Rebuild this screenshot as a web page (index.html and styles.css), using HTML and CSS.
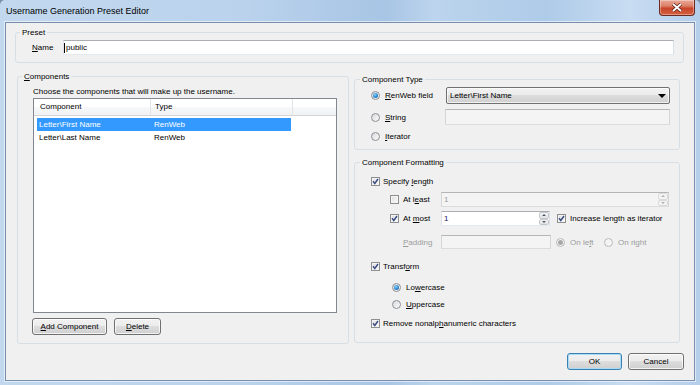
FILE: index.html
```html
<!DOCTYPE html>
<html lang="en">
  <head>
    <meta charset="UTF-8" />
    <title>Username Generation Preset Editor</title>
    <link rel="stylesheet" href="styles.css">
  </head>
  <body>
    <div class="window">
      <div class="titlebar">
        <span class="title">Username Generation Preset Editor</span>
        <div class="close-btn">
          <svg width="12" height="9" viewBox="0 0 12 9">
            <path class="x-shadow" d="M2 1 L10 8 M10 1 L2 8" />
            <path class="x-mark" d="M2 1 L10 8 M10 1 L2 8" />
          </svg>
        </div>
      </div>

      <div class="client">
        <fieldset class="group preset">
          <legend>Preset</legend>
          <div class="name-row">
            <span class="name-label"><u>N</u>ame</span>
            <div class="textbox name-box"><span class="caret"></span>public</div>
          </div>
        </fieldset>

        <div class="main">
          <fieldset class="group components">
            <legend><u>C</u>omponents</legend>
            <p class="hint">Choose the components that will make up the username.</p>
            <div class="listview">
              <div class="lv-header">
                <div class="col col-comp">Component</div>
                <div class="col col-type">Type</div>
                <div class="col col-fill"></div>
              </div>
              <div class="lv-row selected">
                <span class="cell-comp">Letter\First Name</span>
                <span class="cell-type">RenWeb</span>
              </div>
              <div class="lv-row">
                <span class="cell-comp">Letter\Last Name</span>
                <span class="cell-type">RenWeb</span>
              </div>
            </div>
            <div class="list-buttons">
              <button class="btn btn-add"><u>A</u>dd Component</button>
              <button class="btn btn-delete"><u>D</u>elete</button>
            </div>
          </fieldset>

          <div class="side">
            <fieldset class="group comp-type">
              <legend>Component Type</legend>
              <div class="type-grid">
                <div class="option"><span class="radio checked"></span><span><u>R</u>enWeb field</span></div>
                <div class="combo">
                  <span class="combo-text">Letter\First Name</span>
                  <span class="combo-arrow"></span>
                </div>
                <div class="option"><span class="radio"></span><span><u>S</u>tring</span></div>
                <div class="textbox disabled string-box"></div>
                <div class="option"><span class="radio"></span><span><u>I</u>terator</span></div>
                <div></div>
              </div>
            </fieldset>

            <fieldset class="group formatting">
              <legend>Component Formatting</legend>

              <div class="fmt-row r-specify">
                <span class="check on"><svg viewBox="0 0 7 7"><path d="M1 3.2 L2.8 5.4 L6 1" /></svg></span>
                <span class="check-label">Specify <u>l</u>ength</span>
              </div>

              <div class="fmt-row r-least sub">
                <span class="check"></span>
                <span class="check-label field-label">At l<u>e</u>ast</span>
                <div class="textbox disabled spinbox least-box">
                  <span class="spin-value">1</span>
                  <div class="spin"><span class="spin-up"></span><span class="spin-down"></span></div>
                </div>
              </div>

              <div class="fmt-row r-most sub">
                <span class="check on"><svg viewBox="0 0 7 7"><path d="M1 3.2 L2.8 5.4 L6 1" /></svg></span>
                <span class="check-label field-label">At <u>m</u>ost</span>
                <div class="textbox spinbox most-box">
                  <span class="spin-value">1</span>
                  <div class="spin"><span class="spin-up"></span><span class="spin-down"></span></div>
                </div>
                <span class="check on increase"><svg viewBox="0 0 7 7"><path d="M1 3.2 L2.8 5.4 L6 1" /></svg></span>
                <span class="check-label increase-label">Increase length as iterator</span>
              </div>

              <div class="fmt-row r-padding">
                <span class="field-label muted"><u>P</u>adding</span>
                <div class="textbox disabled padding-box"></div>
                <div class="option opt-left"><span class="radio disabled checked"></span><span class="muted">On le<u>f</u>t</span></div>
                <div class="option"><span class="radio disabled"></span><span class="muted">On ri<u>g</u>ht</span></div>
              </div>

              <div class="fmt-row r-transform">
                <span class="check on"><svg viewBox="0 0 7 7"><path d="M1 3.2 L2.8 5.4 L6 1" /></svg></span>
                <span class="check-label">Transf<u>o</u>rm</span>
              </div>

              <div class="fmt-row r-lower case-row">
                <div class="option"><span class="radio checked"></span><span>Lo<u>w</u>ercase</span></div>
              </div>

              <div class="fmt-row r-upper case-row">
                <div class="option"><span class="radio"></span><span><u>U</u>ppercase</span></div>
              </div>

              <div class="fmt-row r-remove">
                <span class="check on"><svg viewBox="0 0 7 7"><path d="M1 3.2 L2.8 5.4 L6 1" /></svg></span>
                <span class="check-label">Remove nonalp<u>h</u>anumeric characters</span>
              </div>
            </fieldset>
          </div>
        </div>

        <div class="dialog-buttons">
          <button class="btn btn-default">OK</button>
          <button class="btn btn-cancel">Cancel</button>
        </div>
      </div>
    </div>
  </body>
</html>
```

FILE: styles.css
```css
html {
  background: #7b8da3;
}

body {
  margin: 0;
  font-family: "Liberation Sans", Arial, sans-serif;
  font-size: 8px;
  color: #000;
}

u {
  text-underline-offset: 1px;
}

.window {
  width: 700px;
  height: 385px;
  box-sizing: border-box;
  border-radius: 5px 5px 0 0;
  overflow: hidden;
  background: linear-gradient(90deg, #c2d8ef 0%, #bad2ec 35%, #a8c5e5 55%, #bcd4ed 62%, #aecbe8 78%, #c8dcf2 90%, #b4cde9 100%);
}

/* title bar */
.titlebar {
  height: 22px;
  display: flex;
  align-items: flex-start;
}

.title {
  font-size: 9px;
  line-height: 10px;
  margin: 6px 0 0 6px;
  color: #000;
}

.close-btn {
  width: 36px;
  height: 16px;
  box-sizing: border-box;
  margin-left: auto;
  margin-right: 5px;
  border: 1px solid #6b2b21;
  border-top: none;
  border-radius: 0 0 4px 4px;
  background: linear-gradient(#eaa898 0%, #dc8068 40%, #c8452b 55%, #d4603f 100%);
  box-shadow: inset 0 0 0 1px rgba(255, 255, 255, 0.35);
  display: flex;
  justify-content: center;
  align-items: center;
}

.close-btn svg {
  display: block;
}

.x-shadow {
  stroke: #5d2218;
  stroke-width: 3.4;
  fill: none;
}

.x-mark {
  stroke: #fff;
  stroke-width: 1.8;
  fill: none;
}

/* client area */
.client {
  width: 690px;
  height: 359px;
  box-sizing: border-box;
  margin-left: 5px;
  padding: 3px 10px 0 9px;
  background: #f0f0f0;
  border: 1px solid #7890ad;
  box-shadow: 0 0 0 1px rgba(255, 255, 255, 0.55);
}

.group {
  margin: 0;
  padding: 0;
  min-width: 0;
  box-sizing: border-box;
  border: 1px solid #d5dfe5;
  border-radius: 3px;
}

.group legend {
  padding: 0 2px;
  line-height: 13px;
}

/* preset */
.preset {
  width: 669px;
  padding: 1px 9px 7px 16px;
}

.preset legend {
  margin-left: -12px;
}

.name-row {
  display: flex;
  align-items: center;
  height: 15px;
}

.name-label {
  width: 31px;
}

.textbox {
  box-sizing: border-box;
  height: 15px;
  background: #fff;
  border: 1px solid;
  border-color: #abadb3 #dbdfe6 #e3e9ef #e2e3ea;
  display: flex;
  align-items: center;
}

.textbox.disabled {
  background: #f4f4f4;
  border-color: #b5b5b5 #d6d6d6 #dcdcdc #d6d6d6;
  color: #9c9c9c;
}

.name-box {
  width: 611px;
}

.caret {
  width: 1px;
  height: 10px;
  background: #000;
  margin-right: 1px;
}

/* main area */
.main {
  display: flex;
  align-items: flex-start;
  margin-top: 7px;
}

.components {
  width: 332px;
  margin-left: 2px;
  padding: 0 0 8px 15px;
}

.components legend {
  margin-left: -11px;
}

.hint {
  margin: 2px 0 0;
  line-height: 13px;
}

.listview {
  width: 304px;
  height: 215px;
  box-sizing: border-box;
  background: #fff;
  border: 1px solid #828790;
}

.lv-header {
  display: flex;
  height: 17px;
  box-sizing: border-box;
  border-bottom: 1px solid #d5d5d5;
  background: linear-gradient(#fff 0%, #fff 50%, #f7f8f9 50%, #f1f2f4 100%);
}

.col {
  box-sizing: border-box;
  line-height: 16px;
  border-right: 1px solid #e3e4e6;
}

.col-comp {
  width: 117px;
  padding-left: 6px;
}

.col-type {
  width: 142px;
  padding-left: 4px;
}

.col-fill {
  flex: 1;
  border-right: none;
}

.lv-row {
  display: flex;
  width: 254px;
  height: 13px;
  line-height: 13px;
  margin-left: 3px;
}

.lv-header + .lv-row {
  margin-top: 2px;
}

.lv-row.selected {
  background: #3399ff;
  color: #fff;
}

.cell-comp {
  width: 117px;
  padding-left: 2px;
  box-sizing: border-box;
}

.list-buttons {
  display: flex;
  gap: 7px;
  margin-top: 5px;
  margin-left: -1px;
}

.btn {
  box-sizing: border-box;
  height: 17px;
  padding: 0;
  font: inherit;
  color: #000;
  line-height: 15px;
  border: 1px solid #707070;
  border-radius: 3px;
  background: linear-gradient(#f2f2f2 0%, #ebebeb 50%, #dddddd 50%, #cfcfcf 100%);
  box-shadow: inset 0 0 0 1px rgba(255, 255, 255, 0.75);
}

.btn-add {
  width: 75px;
}

.btn-delete {
  width: 47px;
}

/* right column */
.side {
  width: 326px;
  margin-left: 5px;
  margin-top: 3px;
}

.comp-type {
  padding: 1px 9px 6px 16px;
}

.comp-type legend,
.formatting legend {
  margin-left: -11px;
}

.type-grid {
  display: grid;
  grid-template-columns: 74px 225px;
  grid-template-rows: 17px 16px 13px;
  row-gap: 5px;
  align-items: center;
}

.option {
  display: flex;
  align-items: center;
  line-height: 13px;
}

.radio {
  position: relative;
  width: 9px;
  height: 9px;
  box-sizing: border-box;
  margin-right: 5px;
  border-radius: 50%;
  border: 1px solid #8c8f94;
  background: linear-gradient(135deg, #d9dadc, #fbfbfb);
  flex-shrink: 0;
}

.radio.checked::after {
  content: "";
  position: absolute;
  left: 1px;
  top: 1px;
  width: 5px;
  height: 5px;
  border-radius: 50%;
  background: radial-gradient(circle at 40% 35%, #8fd3f8 0%, #2a86d0 55%, #0d4f96 100%);
}

.radio.disabled {
  border-color: #b9b9b9;
  background: #f4f4f4;
}

.radio.disabled.checked::after {
  background: #a8a8a8;
}

.combo {
  box-sizing: border-box;
  width: 224px;
  height: 17px;
  margin-left: 1px;
  display: flex;
  align-items: center;
  border: 1px solid #707070;
  border-radius: 2px;
  background: linear-gradient(#f2f2f2 0%, #ebebeb 50%, #dddddd 50%, #cfcfcf 100%);
  box-shadow: inset 0 0 0 1px rgba(255, 255, 255, 0.7);
}

.combo-text {
  flex: 1;
  padding-left: 3px;
}

.combo-arrow {
  width: 0;
  height: 0;
  margin-right: 3px;
  border-left: 4px solid transparent;
  border-right: 4px solid transparent;
  border-top: 4px solid #000;
}

.string-box {
  width: 225px;
  height: 16px;
}

/* formatting */
.formatting {
  margin-top: 6px;
  padding: 0 9px 12px 16px;
}

.fmt-row {
  display: flex;
  align-items: center;
  height: 13px;
  line-height: 13px;
}

.check {
  position: relative;
  width: 9px;
  height: 9px;
  box-sizing: border-box;
  border: 1px solid #8e8f8f;
  background: linear-gradient(135deg, #dcdcdc, #fdfdfd);
  box-shadow: inset 0 0 0 1px #f4f4f4;
  flex-shrink: 0;
}

.check svg {
  position: absolute;
  left: 0;
  top: 0;
  width: 7px;
  height: 7px;
}

.check path {
  fill: none;
  stroke: #3c4f85;
  stroke-width: 1.5;
}

.check-label {
  margin-left: 3px;
}

.sub {
  padding-left: 19px;
  height: 15px;
}

.sub .check-label {
  margin-left: 4px;
}

.field-label {
  width: 38px;
  flex-shrink: 0;
}

.r-specify {
  margin-top: 6px;
}

.r-least,
.r-most {
  margin-top: 4px;
}

.least-box {
  width: 228px;
}

.most-box {
  width: 109px;
}

.spinbox {
  padding-left: 2px;
}

.spin-value {
  flex: 1;
}

.most-box .spin-value {
  color: #1b1464;
}

.spin {
  width: 10px;
  height: 13px;
  display: flex;
  flex-direction: column;
}

.spin-up,
.spin-down {
  flex: 1;
  display: flex;
  justify-content: center;
  align-items: center;
  box-sizing: border-box;
  border: 1px solid #c4c8cc;
  border-radius: 2px;
  background: linear-gradient(#f6f6f6, #e2e2e2);
}

.spin-up::after {
  content: "";
  border-left: 2px solid transparent;
  border-right: 2px solid transparent;
  border-bottom: 2px solid #4d5966;
}

.spin-down::after {
  content: "";
  border-left: 2px solid transparent;
  border-right: 2px solid transparent;
  border-top: 2px solid #4d5966;
}

.least-box .spin-up::after {
  border-bottom-color: #b0b0b0;
}

.least-box .spin-down::after {
  border-top-color: #b0b0b0;
}

.least-box .spin-up,
.least-box .spin-down {
  border-color: #dadada;
  background: #f4f4f4;
}

.increase {
  margin-left: 7px;
}

.r-padding {
  margin-top: 9px;
  height: 14px;
  padding-left: 32px;
}

.muted {
  color: #9c9c9c;
}

.padding-box {
  width: 110px;
  height: 14px;
}

.opt-left {
  width: 48px;
  margin-left: 5px;
}

.r-transform {
  margin-top: 11px;
}

.case-row {
  padding-left: 21px;
}

.r-lower {
  margin-top: 8px;
}

.r-upper {
  margin-top: 4px;
}

.r-remove {
  margin-top: 6px;
}

/* dialog buttons */
.dialog-buttons {
  display: flex;
  justify-content: flex-end;
  gap: 6px;
  margin-top: 9px;
}

.btn-default {
  width: 55px;
  border-color: #3c7fb1;
  box-shadow: inset 0 0 0 1px #a7dcf7;
}

.btn-cancel {
  width: 56px;
}
```
